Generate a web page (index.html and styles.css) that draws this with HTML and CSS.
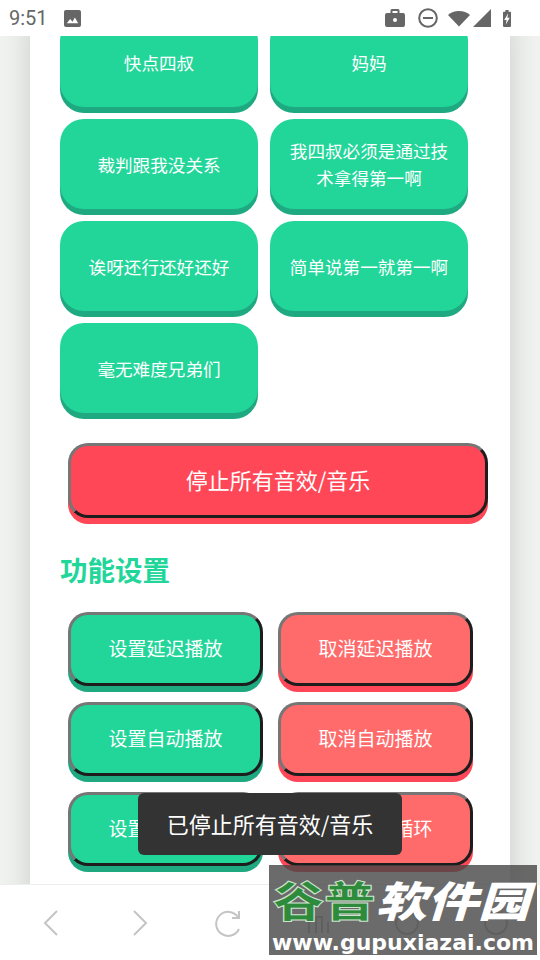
FILE: index.html
```html
<!DOCTYPE html>
<html lang="zh-CN">
<head>
    <meta charset="UTF-8">
    <meta name="viewport" content="width=device-width, initial-scale=1.0">
    <title>音效板</title>
    <link rel="stylesheet" href="styles.css">
</head>
<body>
    <div id="status-bar">
        <span class="time">9:51</span>
        <svg class="icon-image" viewBox="0 0 18 18"><path fill="#666" d="M2 0h14a2 2 0 0 1 2 2v14a2 2 0 0 1-2 2H2a2 2 0 0 1-2-2V2a2 2 0 0 1 2-2z"/><path fill="#fff" d="M3 14l3.500-4.500 2.500 3 2.500-4.500 3.500 6z"/></svg>
        <span class="spacer"></span>
        <svg class="icon-case" viewBox="0 0 20 20"><path fill="#666" d="M7 1h6a1.500 1.500 0 0 1 1.500 1.500V5H18a2 2 0 0 1 2 2v10a2 2 0 0 1-2 2H2a2 2 0 0 1-2-2V7a2 2 0 0 1 2-2h3.500V2.500A1.500 1.500 0 0 1 7 1zm.500 2v2h5V3z"/><circle cx="10" cy="12" r="2" fill="#fff"/></svg>
        <svg class="icon-dnd" viewBox="0 0 20 20"><circle cx="10" cy="10" r="8.800" fill="none" stroke="#666" stroke-width="2"/><rect x="5" y="9" width="10" height="2" fill="#666"/></svg>
        <svg class="icon-wifi" viewBox="0 0 22 16"><path fill="#666" d="M0 4.500C3 2 6.500.5 11 .5s8 1.500 11 4L11 16z"/></svg>
        <svg class="icon-signal" viewBox="0 0 18 18"><path fill="#666" d="M18 0v18H0z"/></svg>
        <svg class="icon-battery" viewBox="0 0 10 21"><path fill="#666" d="M3 0h4v2h2a1 1 0 0 1 1 1v17a1 1 0 0 1-1 1H1a1 1 0 0 1-1-1V3a1 1 0 0 1 1-1h2z"/><path fill="#fff" d="M6.500 4L1.500 12.500h3L3.500 18l5-8.500h-3z"/></svg>
    </div>

    <div id="content">
        <div class="panel">
            <div class="sound-grid">
                <div class="tile">快点四叔</div>
                <div class="tile">妈妈</div>
                <div class="tile">裁判跟我没关系</div>
                <div class="tile">我四叔必须是通过技术拿得第一啊</div>
                <div class="tile">诶呀还行还好还好</div>
                <div class="tile">简单说第一就第一啊</div>
                <div class="tile">毫无难度兄弟们</div>
            </div>

            <button class="stop-btn">停止所有音效/音乐</button>

            <h2 class="section-title">功能设置</h2>

            <div class="setting-grid">
                <button class="setting-btn green">设置延迟播放</button>
                <button class="setting-btn red">取消延迟播放</button>
                <button class="setting-btn green">设置自动播放</button>
                <button class="setting-btn red">取消自动播放</button>
                <button class="setting-btn green">设置自动循环</button>
                <button class="setting-btn red">取消自动循环</button>
            </div>
        </div>
    </div>

    <div id="toolbar">
        <svg viewBox="0 0 30 30"><path d="M21 3L9 15l12 12" /></svg>
        <svg viewBox="0 0 30 30"><path d="M9 3l12 12L9 27" /></svg>
        <svg viewBox="0 0 30 30"><path d="M25 21a12 12 0 1 1-1-12M25 3v7h-7" /></svg>
        <svg viewBox="0 0 30 30"><path d="M6 25V14M13 25V9h6v16M25 25V14" /></svg>
        <svg viewBox="0 0 30 30"><circle cx="15" cy="15" r="11" /></svg>
        <svg viewBox="0 0 30 30"><circle cx="15" cy="15" r="11" /></svg>
    </div>

    <div class="toast">已停止所有音效/音乐</div>

    <div class="watermark">
        <div class="wm-title"><span class="wm-green">谷普</span><span class="wm-white">软件园</span></div>
        <div class="wm-url">www.gupuxiazai.com</div>
    </div>
</body>
</html>
```

FILE: styles.css
```css
:root{
    --green: #22d69a;
    --green-dark: #1fa981;
    --red: #ff4757;
    --pink: #ff6b6b;
    --cjk-font: "Noto Sans CJK SC", "Noto Sans", sans-serif;
}
html,body {
    margin: 0;
    padding: 0;
    font-family: var(--cjk-font);
}
body{
    position: relative;
    display: flex;
    flex-direction: column;
    width: 540px;
    height: 960px;
    overflow: hidden;
    background-color: #fff;
}

/* ===========
    Status bar
    ========== */
#status-bar{
    display: flex;
    align-items: center;
    height: 36px;
    flex-shrink: 0;
    padding: 0 29px 0 9px;
    background-color: #fff;
}
#status-bar .time{
    font-family: Roboto, sans-serif;
    font-size: 20px;
    color: #666;
    width: 55px;
}
#status-bar .spacer{
    flex: 1;
}
.icon-image{
    width: 17px;
    height: 17px;
}
.icon-case{
    width: 20px;
    height: 20px;
    margin-right: 13px;
}
.icon-dnd{
    width: 20px;
    height: 20px;
    margin-right: 10px;
}
.icon-wifi{
    width: 22px;
    height: 17px;
    margin-right: 3px;
}
.icon-signal{
    width: 18px;
    height: 18px;
    margin-right: 12px;
}
.icon-battery{
    width: 8px;
    height: 21px;
}

/* ===========
    Page area
    ========== */
#content{
    flex: 1;
    overflow: hidden;
    background-color: #f1f3f0;
}
.panel{
    box-sizing: border-box;
    width: 480px;
    height: 900px;
    margin: -19px 0 0 30px;
    padding: 0 0 0 30px;
    background-color: #fff;
    box-shadow: 0 0 30px rgba(0, 0, 0, 0.16);
}

.sound-grid{
    display: grid;
    grid-template-columns: 198px 198px;
    grid-auto-rows: 90px;
    gap: 12px;
}
.tile{
    display: flex;
    align-items: center;
    justify-content: center;
    padding: 0 16px;
    text-align: center;
    font-size: 17.6px;
    line-height: 27px;
    color: #fff;
    background-color: var(--green);
    border-radius: 24px;
    box-shadow: 0 6px 0 var(--green-dark);
}

button{
    font-family: var(--cjk-font);
    color: #fff;
    box-sizing: border-box;
    border-width: 3px;
    border-style: solid;
    border-color: #767676 #1d1d1d #1d1d1d #767676;
    padding: 0 0 3px;
}
.stop-btn{
    display: block;
    width: 420px;
    height: 75px;
    margin: 30px 0 0 8px;
    font-size: 22px;
    background-color: var(--red);
    border-radius: 20px;
    box-shadow: 0 6px 0 var(--red);
}

.section-title{
    margin: 31px 0 0;
    font-size: 27.500px;
    line-height: 40px;
    font-weight: bold;
    color: var(--green);
}

.setting-grid{
    display: grid;
    grid-template-columns: 195px 195px;
    grid-auto-rows: 74px;
    gap: 16px 15px;
    margin: 23px 0 0 8px;
}
.setting-btn{
    font-size: 19px;
    border-radius: 20px;
}
.setting-btn.green{
    background-color: var(--green);
    box-shadow: 0 6px 0 var(--green-dark);
}
.setting-btn.red{
    background-color: var(--pink);
    box-shadow: 0 6px 0 var(--red);
}

/* ===========
    Bottom toolbar
    ========== */
#toolbar{
    display: flex;
    align-items: center;
    justify-content: space-around;
    height: 75px;
    flex-shrink: 0;
    padding-left: 6px;
    background-color: #fff;
    border-top: 1px solid #eee;
}
#toolbar svg{
    width: 30px;
    height: 30px;
    fill: none;
    stroke: #c4c4c4;
    stroke-width: 2;
}

/* ===========
    Things on top
    ========== */
.toast{
    position: absolute;
    left: 138px;
    top: 793px;
    box-sizing: border-box;
    width: 264px;
    height: 62px;
    padding-bottom: 3px;
    display: flex;
    align-items: center;
    justify-content: center;
    font-size: 22px;
    color: #fff;
    background-color: #333;
    border-radius: 6px;
}
.watermark{
    position: absolute;
    left: 269px;
    top: 865px;
    width: 268px;
    height: 90px;
    overflow: hidden;
    background-color: rgba(70, 70, 70, 0.8);
}
.wm-title{
    display: flex;
    width: 214px;
    height: 42px;
    margin: 13px 0 11px 4px;
    font-size: 42px;
    line-height: 42px;
    font-weight: 900;
    white-space: nowrap;
    transform: scaleX(1.220);
    transform-origin: left center;
}
.wm-green{
    color: #2e8b3c;
    -webkit-text-stroke: 1px #cfe3cf;
}
.wm-white{
    color: #fff;
    font-style: italic;
}
.wm-url{
    font-family: "DejaVu Sans", sans-serif;
    font-size: 22px;
    line-height: 24px;
    font-weight: bold;
    text-align: center;
    white-space: nowrap;
    color: #fff;
}
```
